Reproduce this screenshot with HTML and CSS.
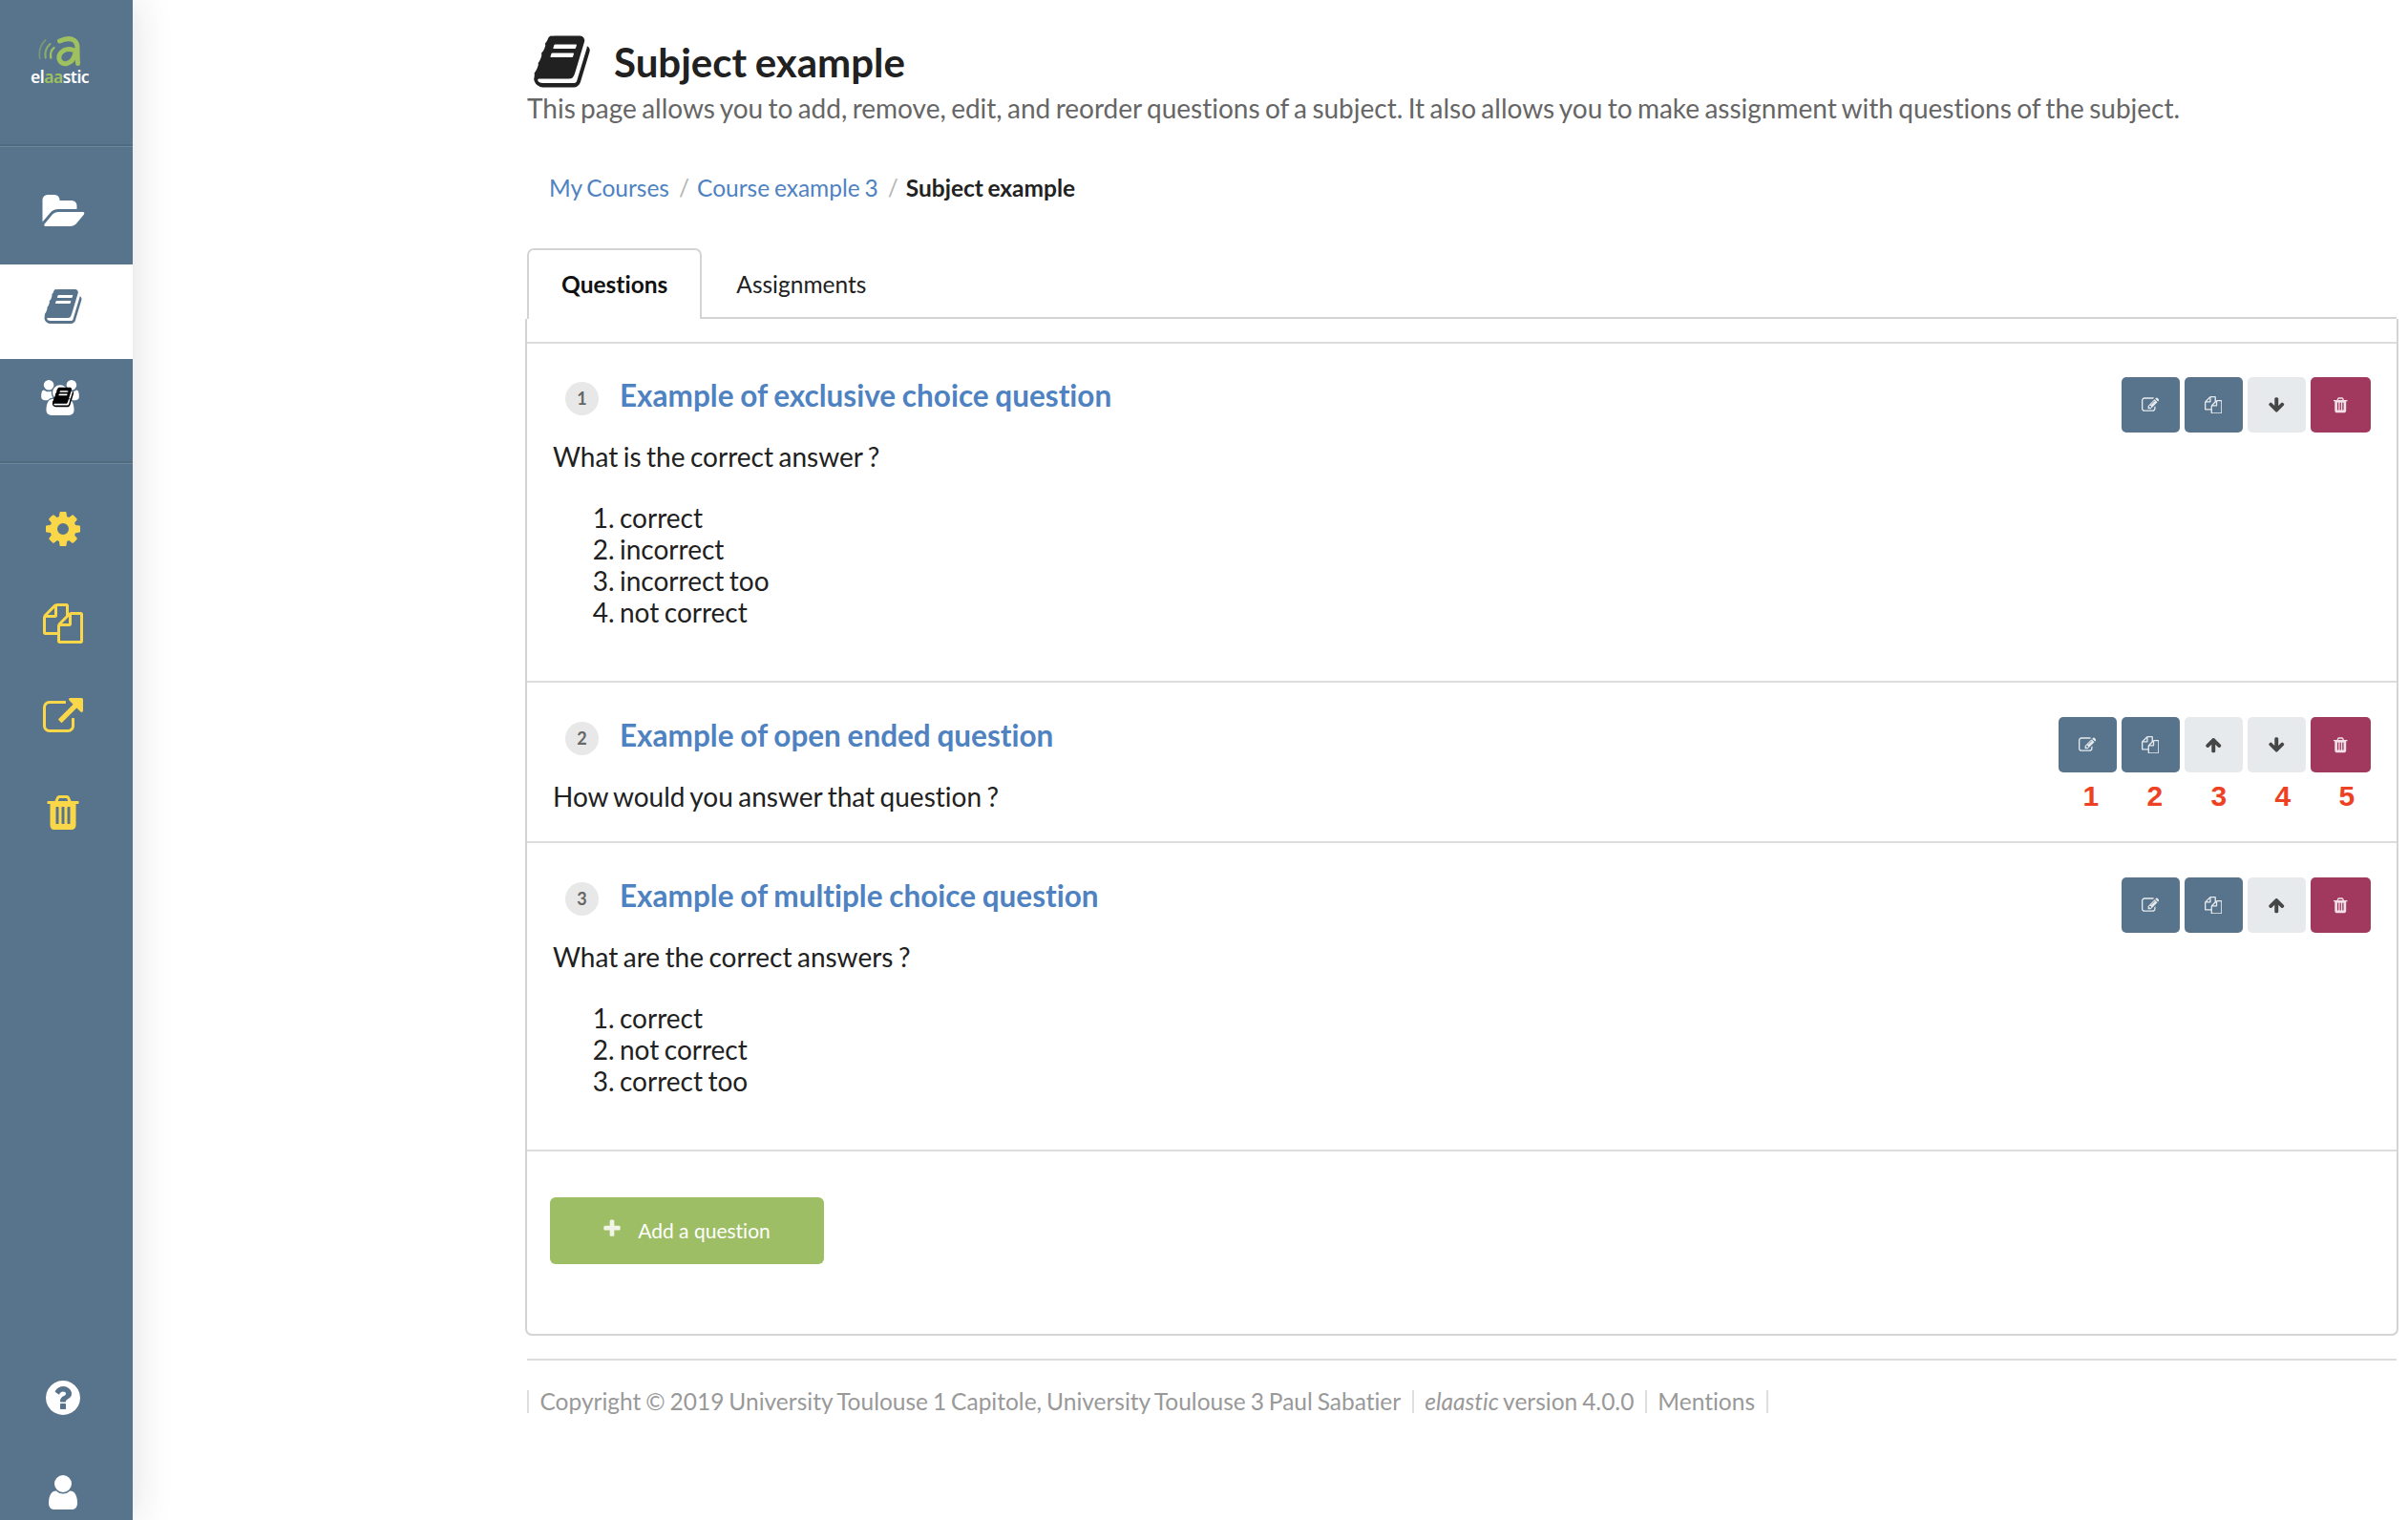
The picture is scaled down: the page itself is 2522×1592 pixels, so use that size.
FILE: index.html
```html
<!DOCTYPE html>
<html lang="en">
<head>
<meta charset="utf-8">
<title>Subject example - elaastic</title>
<link rel="stylesheet" href="styles.css">
</head>
<body>
<svg class="sprite" aria-hidden="true">
  <symbol id="book" viewBox="0 0 1792 1792"><path d="M1703 478q40 57 18 129l-275 906q-19 64-76.5 107.5t-122.5 43.5h-923q-77 0-148.5-53.5t-99.5-131.5q-24-67-2-127 0-4 3-27t4-37q1-8-3-21.5t-3-19.5q2-11 8-21t16.5-23.5 16.5-23.5q23-38 45-91.5t30-91.5q3-10 .5-30t-.5-28q3-11 17-28t17-23q21-36 42-92t25-90q1-9-2.5-32t.5-28q4-13 22-30.5t22-22.5q19-26 42.5-84.5t27.5-96.5q1-8-3-25.5t-2-26.5q2-8 9-18t18-23 17-21q8-12 16.5-30.5t15-35 16-36 19.5-32 26.5-23.5 36-11.5 47.5 5.5l-1 3q38-9 51-9h761q74 0 114 56t18 130l-274 906q-36 119-71.5 153.5t-128.5 34.5h-869q-27 0-38 15-11 16-1 43 24 70 144 70h923q29 0 56-15.5t35-41.5l300-987q7-22 5-57 38 15 59 43zm-1064 2q-4 13 2 22.5t20 9.5h608q13 0 25.5-9.5t16.5-22.5l21-64q4-13-2-22.5t-20-9.5h-608q-13 0-25.5 9.5t-16.5 22.5zm-83 256q-4 13 2 22.5t20 9.5h608q13 0 25.5-9.5t16.5-22.5l21-64q4-13-2-22.5t-20-9.5h-608q-13 0-25.5 9.5t-16.5 22.5z"/></symbol>
  <symbol id="folder" viewBox="0 0 1943 1792"><path d="M1943 952q0 31-31 66l-336 396q-43 51-120.5 86.5t-143.5 35.5h-1088q-34 0-60.5-13t-26.5-43q0-31 31-66l336-396q43-51 120.5-86.5t143.5-35.5h1088q34 0 60.5 13t26.5 43zm-343-344v160h-832q-94 0-197 47.5t-164 119.5l-337 396-5 6q0-4-.5-12.5t-.5-12.5v-960q0-92 66-158t158-66h320q92 0 158 66t66 158v32h544q92 0 158 66t66 158z"/></symbol>
  <symbol id="users" viewBox="64 0 1920 1792"><path d="M657 896q-162 5-265 128h-134q-82 0-138-40.5t-56-118.5q0-353 124-353 6 0 43.5 21t97.5 42.5 119 21.5q67 0 133-23-5 37-5 66 0 159 81 256zm1071 637q0 120-73 189.5t-194 69.5h-874q-121 0-194-69.5t-73-189.5q0-53 3.5-103.5t14-109 26.5-108.5 43-97.5 62-81 85.5-53.5 111.5-20q10 0 43 21.5t73 48 107 48 135 21.5 135-21.5 107-48 73-48 43-21.5q61 0 111.5 20t85.5 53.5 62 81 43 97.5 26.5 108.5 14 109 3.5 103.5zm-1024-1277q0 106-75 181t-181 75-181-75-75-181 75-181 181-75 181 75 75 181zm704 384q0 159-112.5 271.5t-271.5 112.5-271.5-112.5-112.5-271.5 112.5-271.5 271.5-112.5 271.5 112.5 112.5 271.5zm576 225q0 78-56 118.5t-138 40.5h-134q-103-123-265-128 81-97 81-256 0-29-5-66 66 23 133 23 59 0 119-21.5t97.5-42.5 43.5-21q124 0 124 353zm-128-609q0 106-75 181t-181 75-181-75-75-181 75-181 181-75 181 75 75 181z"/></symbol>
  <symbol id="cog" viewBox="0 0 1792 1792"><path d="M1152 896q0-106-75-181t-181-75-181 75-75 181 75 181 181 75 181-75 75-181zm512-109v222q0 12-8 23t-20 13l-185 28q-19 54-39 91 35 50 107 138 10 12 10 25t-9 23q-27 37-99 108t-94 71q-12 0-26-9l-138-108q-44 23-91 38-16 136-29 186-7 28-36 28h-222q-14 0-24.500-8.500t-11.500-21.500l-28-184q-49-16-90-37l-141 107q-10 9-25 9-14 0-25-11-126-114-165-168-7-10-7-23 0-12 8-23 15-21 51-66.500t54-70.500q-27-50-41-99l-183-27q-13-2-21-12.500t-8-23.500v-222q0-12 8-23t19-13l186-28q14-46 39-92-40-57-107-138-10-12-10-24 0-10 9-23 26-36 98.500-107.500t94.500-71.500q13 0 26 10l138 107q44-23 91-38 16-136 29-186 7-28 36-28h222q14 0 24.500 8.500t11.500 21.500l28 184q49 16 90 37l142-107q9-9 24-9 13 0 25 10 129 119 165 170 7 8 7 22 0 12-8 23-15 21-51 66.500t-54 70.500q26 50 41 98l183 28q13 2 21 12.500t8 23.500z"/></symbol>
  <symbol id="copy" viewBox="0 0 1792 1792"><path d="M1696 384q40 0 68 28t28 68v1216q0 40-28 68t-68 28h-960q-40 0-68-28t-28-68v-288h-544q-40 0-68-28t-28-68v-672q0-40 20-88t48-76l408-408q28-28 76-48t88-20h416q40 0 68 28t28 68v328q68-40 128-40h416zm-544 213l-299 299h299v-299zm-640-384l-299 299h299v-299zm196 647l316-316v-416h-384v416q0 40-28 68t-68 28h-416v640h512v-256q0-40 20-88t48-76zm956 804v-1152h-384v416q0 40-28 68t-68 28h-416v640h896z"/></symbol>
  <symbol id="external" viewBox="0 0 1792 1792"><path d="M1408 928v320q0 119-84.500 203.500t-203.500 84.500h-832q-119 0-203.500-84.500t-84.500-203.500v-832q0-119 84.500-203.500t203.500-84.500h704q14 0 23 9t9 23v64q0 14-9 23t-23 9h-704q-66 0-113 47t-47 113v832q0 66 47 113t113 47h832q66 0 113-47t47-113v-320q0-14 9-23t23-9h64q14 0 23 9t9 23zm384-864v512q0 26-19 45t-45 19-45-19l-176-176-652 652q-10 10-23 10t-23-10l-114-114q-10-10-10-23t10-23l652-652-176-176q-19-19-19-45t19-45 45-19h512q26 0 45 19t19 45z"/></symbol>
  <symbol id="trash" viewBox="0 0 1792 1792"><path d="M704 1376v-704q0-14-9-23t-23-9h-64q-14 0-23 9t-9 23v704q0 14 9 23t23 9h64q14 0 23-9t9-23zm256 0v-704q0-14-9-23t-23-9h-64q-14 0-23 9t-9 23v704q0 14 9 23t23 9h64q14 0 23-9t9-23zm256 0v-704q0-14-9-23t-23-9h-64q-14 0-23 9t-9 23v704q0 14 9 23t23 9h64q14 0 23-9t9-23zm-544-992h448l-48-117q-7-9-17-11h-317q-10 2-17 11zm928 32v64q0 14-9 23t-23 9h-96v948q0 83-47 143.500t-113 60.500h-832q-66 0-113-58.500t-47-141.500v-952h-96q-14 0-23-9t-9-23v-64q0-14 9-23t23-9h309l70-167q15-37 54-63t79-26h320q40 0 79 26t54 63l70 167h309q14 0 23 9t9 23z"/></symbol>
  <symbol id="help" viewBox="0 0 1792 1792"><path d="M1024 1376v-192q0-14-9-23t-23-9h-192q-14 0-23 9t-9 23v192q0 14 9 23t23 9h192q14 0 23-9t9-23zm256-672q0-88-55.500-163t-138.500-116-170-41q-243 0-371 213-15 24 8 42l132 100q7 6 19 6 16 0 25-12 53-68 86-92 34-24 86-24 48 0 85.500 26t37.500 59q0 38-20 61t-68 45q-63 28-115.500 86.500t-52.500 125.500v36q0 14 9 23t23 9h192q14 0 23-9t9-23q0-19 21.500-49.500t54.500-49.500q32-18 49-28.500t46-35 44.500-48 28-60.500 12.500-81zm384 192q0 209-103 385.500t-279.500 279.500-385.500 103-385.500-103-279.500-279.500-103-385.500 103-385.500 279.500-279.500 385.500-103 385.500 103 279.500 279.500 103 385.500z"/></symbol>
  <symbol id="user" viewBox="0 0 1792 1792"><path d="M1536 1399q0 109-62.500 187t-150.500 78h-854q-88 0-150.500-78t-62.500-187q0-85 8.500-160.500t31.500-152 58.500-131 94-89 134.500-34.500q131 128 313 128t313-128q76 0 134.500 34.500t94 89 58.500 131 31.500 152 8.500 160.500zm-256-887q0 159-112.500 271.500t-271.500 112.500-271.500-112.500-112.500-271.500 112.500-271.500 271.500-112.500 271.500 112.500 112.500 271.500z"/></symbol>
  <symbol id="edit" viewBox="0 0 1792 1792"><path d="M888 1184l116-116-152-152-116 116v56h96v96h56zm440-720q-16-16-33 1l-350 350q-17 17-1 33t33-1l350-350q17-17 1-33zm80 594v190q0 119-84.500 203.500t-203.500 84.500h-832q-119 0-203.500-84.500t-84.500-203.500v-832q0-119 84.500-203.500t203.500-84.500h832q63 0 117 25 15 7 18 23 3 17-9 29l-49 49q-14 14-32 8-23-6-45-6h-832q-66 0-113 47t-47 113v832q0 66 47 113t113 47h832q66 0 113-47t47-113v-126q0-13 9-22l64-64q15-15 35-7t20 29zm-96-738l288 288-672 672h-288v-288zm444 132l-92 92-288-288 92-92q28-28 68-28t68 28l152 152q28 28 28 68t-28 68z"/></symbol>
  <symbol id="up" viewBox="0 0 1792 1792"><path d="M1675 971q0 51-37 90l-75 75q-38 38-91 38-54 0-90-38l-294-293v704q0 52-37.500 84.500t-90.500 32.500h-128q-53 0-90.500-32.500t-37.500-84.500v-704l-294 293q-36 38-90 38t-90-38l-75-75q-38-38-38-90 0-53 38-91l651-651q35-37 90-37 54 0 91 37l651 651q37 39 37 91z"/></symbol>
  <symbol id="down" viewBox="0 0 1792 1792"><path d="M1675 832q0 53-37 90l-651 652q-39 37-91 37-53 0-90-37l-651-652q-38-36-38-90 0-53 38-91l74-75q39-37 91-37 53 0 90 37l294 294v-704q0-52 38-90t90-38h128q52 0 90 38t38 90v704l294-294q37-37 90-37 52 0 91 37l75 75q37 39 37 91z"/></symbol>
  <symbol id="plus" viewBox="0 0 1792 1792"><path d="M1600 736v192q0 40-28 68t-68 28h-416v416q0 40-28 68t-68 28h-192q-40 0-68-28t-28-68v-416h-416q-40 0-68-28t-28-68v-192q0-40 28-68t68-28h416v-416q0-40 28-68t68-28h192q40 0 68 28t28 68v416h416q40 0 68 28t28 68z"/></symbol>
</svg>

<div class="page">
  <nav class="sidebar">
    <a class="logo">
      <svg class="logo-mark" viewBox="0 0 46 32">
        <g fill="none" stroke="#9fc05f" stroke-linecap="round">
          <path d="M7.500 4Q-.3 12 1.700 23" stroke-width="1.800" opacity=".45"/>
          <path d="M12.500 8Q6 14 7.700 22.500" stroke-width="2.100" opacity=".75"/>
          <path d="M16.500 12Q12 16 13.200 22.500" stroke-width="2.300"/>
          <path d="M22.500 5Q32 .5 38 4.500Q41.500 7.500 41 14Q41 22 41.500 28.500M37 14.500Q31 12.500 26.500 15Q21 18.500 22 24Q24 29.500 30 28.500Q37 27 39 17" stroke-width="5"/>
        </g>
      </svg>
      <span class="logo-text">el<b>aa</b>stic</span>
    </a>
    <div class="group first">
      <a class="item"><svg class="icon wide"><use href="#folder"/></svg></a>
      <a class="item active"><svg class="icon"><use href="#book"/></svg></a>
      <a class="item stacked"><span class="stack"><svg class="team"><use href="#users"/></svg><svg class="corner"><use href="#book"/></svg></span></a>
    </div>
    <div class="group tools">
      <a class="item"><svg class="icon"><use href="#cog"/></svg></a>
      <a class="item"><svg class="icon"><use href="#copy"/></svg></a>
      <a class="item"><svg class="icon"><use href="#external"/></svg></a>
      <a class="item"><svg class="icon"><use href="#trash"/></svg></a>
    </div>
    <div class="group bottom">
      <a class="item"><svg class="icon"><use href="#help"/></svg></a>
      <a class="item"><svg class="icon"><use href="#user"/></svg></a>
    </div>
  </nav>

  <main class="content">
    <header>
      <h1><svg><use href="#book"/></svg>Subject example</h1>
      <p class="lead">This page allows you to add, remove, edit, and reorder questions of a subject. It also allows you to make assignment with questions of the subject.</p>
    </header>
    <div class="breadcrumb"><a>My Courses</a><span class="slash">/</span><a>Course example 3</a><span class="slash">/</span><b>Subject example</b></div>
    <div class="tabs"><a class="tab active">Questions</a><a class="tab">Assignments</a></div>

    <section class="panel">
      <article class="question one">
        <div class="head">
          <span class="num">1</span><h2>Example of exclusive choice question</h2>
          <div class="actions">
            <button class="blue"><svg><use href="#edit"/></svg></button>
            <button class="blue"><svg><use href="#copy"/></svg></button>
            <button class="grey"><svg><use href="#down"/></svg></button>
            <button class="red"><svg><use href="#trash"/></svg></button>
          </div>
        </div>
        <p>What is the correct answer ?</p>
        <ol><li>correct</li><li>incorrect</li><li>incorrect too</li><li>not correct</li></ol>
      </article>
      <article class="question two">
        <div class="head">
          <span class="num">2</span><h2>Example of open ended question</h2>
          <div class="actions">
            <button class="blue"><svg><use href="#edit"/></svg></button>
            <button class="blue"><svg><use href="#copy"/></svg></button>
            <button class="grey"><svg><use href="#up"/></svg></button>
            <button class="grey"><svg><use href="#down"/></svg></button>
            <button class="red"><svg><use href="#trash"/></svg></button>
            <div class="marks"><span>1</span><span>2</span><span>3</span><span>4</span><span>5</span></div>
          </div>
        </div>
        <p>How would you answer that question ?</p>
      </article>
      <article class="question three">
        <div class="head">
          <span class="num">3</span><h2>Example of multiple choice question</h2>
          <div class="actions">
            <button class="blue"><svg><use href="#edit"/></svg></button>
            <button class="blue"><svg><use href="#copy"/></svg></button>
            <button class="grey"><svg><use href="#up"/></svg></button>
            <button class="red"><svg><use href="#trash"/></svg></button>
          </div>
        </div>
        <p>What are the correct answers ?</p>
        <ol><li>correct</li><li>not correct</li><li>correct too</li></ol>
      </article>
      <div class="add-row"><button class="add"><svg><use href="#plus"/></svg>Add a question</button></div>
    </section>

    <footer><span>Copyright © 2019 University Toulouse 1 Capitole, University Toulouse 3 Paul Sabatier</span><span><i>elaastic</i> version 4.0.0</span><span>Mentions</span></footer>
  </main>
</div>
</body>
</html>
```
FILE: styles.css
```css
* { box-sizing: border-box; }
body { margin: 0; background: #fff; color: #212121; font-family: Lato, "Liberation Sans", sans-serif; font-size: 24.5px; font-variant-ligatures: none; }
h1, h2, p, ol { margin: 0; }
svg { display: block; fill: currentColor; flex: none; }
.sprite { display: none; }
.page { display: flex; height: 1592px; overflow: hidden; }

/* Sidebar */
.sidebar { display: flex; flex-direction: column; flex: none; width: 139px; height: 1592px; background: #57748c; color: #fff; box-shadow: 0 0 40px rgba(34, 36, 38, .15); }
.logo { height: 151px; padding: 38px 0 0 32px; display: flex; flex-direction: column; }
.logo-mark { width: 46px; height: 32px; margin-left: 8px; }
.logo-text { font: 600 17.500px/20px "Noto Sans", sans-serif; letter-spacing: -.5px; }
.logo-text b { font-weight: 600; color: #9fc05f; }
.group { border-top: 2px solid #506a80; box-shadow: inset 0 1px #6b879d; }
.group.first { height: 332px; padding-top: 25px; }
.group.tools { color: #fad749; padding-top: 25px; }
.item { display: flex; justify-content: center; height: 99px; padding: 23px 7px 0 0; }
.icon { width: 42px; height: 42px; }
.icon.wide { width: 45.500px; height: 42px; }
.item.active { background: #fff; color: #57748c; }
.first .item { padding-top: 23px; }
.group .stack { position: relative; width: 40px; height: 38px; margin: -1px 13px 0 0; }
.first .stacked { padding: 23px 0 0 0; }
.team { width: 40px; height: 37px; }
.corner { position: absolute; left: 11px; top: 6px; width: 24px; height: 24px; color: #000; }
.group.bottom { margin-top: auto; height: 174.500px; border: 0; box-shadow: none; }
.bottom .item { padding-top: 25px; }

/* Main column */
.content { margin-left: 411px; width: 1962px; padding-left: 2px; }
h1 { display: flex; align-items: center; height: 63px; margin-top: 33px; padding-left: 5px; gap: 23px; font-size: 42px; font-weight: 700; word-spacing: -.04em; }
h1 svg { width: 63px; height: 63px; }
.lead { font-size: 28px; line-height: 34px; color: #666; word-spacing: -.065em; white-space: nowrap; }
.breadcrumb { display: flex; margin: 50px 0 0 23px; line-height: 34px; color: #222; word-spacing: -.06em; }
.breadcrumb a { color: #4f82c1; }
.slash { color: #b5b5b5; padding: 0 8px 0 10px; }
.tabs { display: flex; height: 74px; margin: 46px 2px 0 0; border-bottom: 2px solid #d4d4d5; }
.tab { height: 74px; padding: 0 36px; line-height: 76px; }
.tab.active { padding: 0 34px; border: 2px solid #d4d4d5; border-bottom: 0; border-radius: 7px 7px 0 0; background: #fff; font-weight: 700; color: #111; line-height: 72px; }
.panel { margin-left: -2px; width: 1962px; height: 1065px; padding-top: 24px; border: 2px solid #d4d4d5; border-top: 0; border-radius: 0 0 7px 7px; }
.question { border-top: 2px solid #dcddde; padding: 36px 27.500px 0 27px; }
.one { height: 355px; padding-top: 35px; }
.two { height: 168px; }
.three { height: 323px; }
.head { display: flex; height: 58px; }
.num { width: 35px; height: 35px; margin: 5px 22px 0 13px; border-radius: 50%; background: #e8e8e8; color: #666; font-size: 18px; font-weight: 700; line-height: 34px; text-align: center; }
h2 { font-size: 31.500px; line-height: 39px; color: #4f82c1; word-spacing: -.03em; }
.actions { position: relative; display: flex; gap: 5px; margin-left: auto; }
.question p, .question li { font-size: 28px; line-height: 33px; word-spacing: -.06em; }
.question p { margin-top: 9px; }
.question ol { margin-top: 31px; padding-left: 70px; }
button { display: flex; align-items: center; justify-content: center; border: 0; padding: 0; width: 61px; height: 58px; border-radius: 5px; font-family: inherit; color: #fff; font-variant-ligatures: none; }
.actions svg { width: 18.500px; height: 18.500px; opacity: .85; }
.blue { background: #57748c; }
.grey { background: #e6eaec; color: #2a2a2a; }
.red { background: #a1395e; width: 63px; }
.marks { position: absolute; left: 19px; top: 66px; display: flex; font: 700 30px/34px "Liberation Sans", Arial, sans-serif; color: #ee4023; }
.marks span { width: 67px; padding-left: 7px; }
.add-row { height: 191px; border-top: 2px solid #dcddde; padding: 48px 24px; }
.add { width: 287px; height: 70px; border-radius: 6px; background: #9dbe64; font-size: 21px; gap: 16px; padding: 0 2px 1px 0; }
.add svg { width: 22px; height: 22px; opacity: .85; margin-top: -3px; }
footer { display: flex; margin: 24px 2px 0 0; padding-top: 31px; border-top: 2px solid #dcddde; color: #999; line-height: 24px; word-spacing: -.055em; }
footer span { border-left: 2px solid #dedede; padding: 0 11.500px; }
footer span:last-child { border-right: 2px solid #dedede; }
```
